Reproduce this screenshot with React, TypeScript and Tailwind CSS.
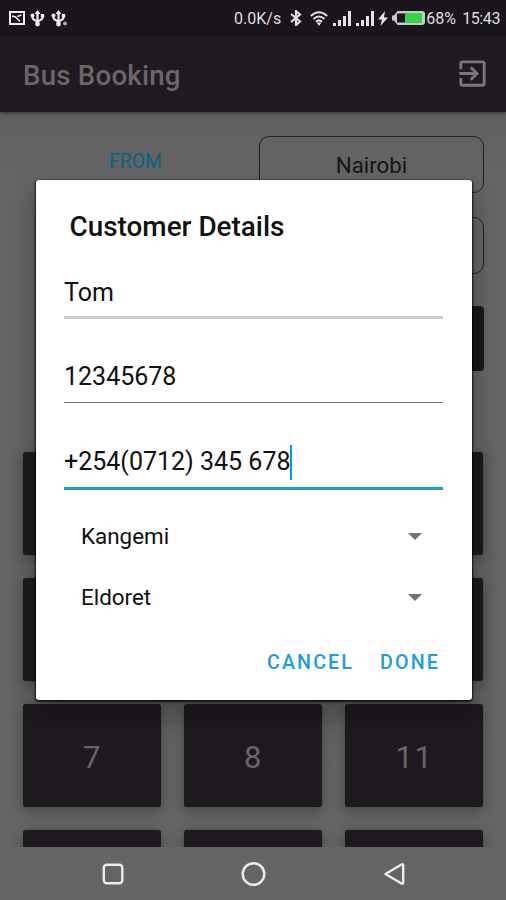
import { PropsWithChildren } from "react";

const seats = ["", "", "", "", "", "", "7", "8", "11", "", "", ""];

export default function App() {
  return (
    <div className="relative flex h-[900px] w-[506px] flex-col overflow-hidden bg-[#656565] font-['Roboto','Noto_Sans',sans-serif] text-[#111]">
      <StatusBar />

      {/* app bar */}
      <header className="z-10 flex h-[76px] shrink-0 items-center justify-between bg-[#1e1a1f] pr-[16px] pl-[23px] shadow-[0_1px_4px_rgba(0,0,0,0.5)]">
        <h1 className="pt-[3px] text-[27.7px] leading-8 font-medium tracking-[0.2px] text-[#69666a]">Bus Booking</h1>
        <ExitIcon />
      </header>

      <main className="h-[735px] shrink-0 overflow-hidden bg-linear-to-b from-[#606060] to-[#656565] to-10% px-[23px]">
        <div className="mt-6 grid grid-cols-[225px_225px] gap-x-[11px] gap-y-6">
          <div className="flex h-[57px] items-center justify-center pb-[5px] text-[19.4px] text-[#086285]">FROM</div>
          <Box>Nairobi</Box>
          <div />
          <Box />
          <div />
          <div className="mt-2 h-[65px] rounded-[4px] bg-[#1b171b]" />
        </div>

        {/* seats */}
        <div className="mt-[81px] grid grid-cols-3 gap-[23px]">
          {seats.map((label, i) => (
            <Seat key={i}>{label}</Seat>
          ))}
        </div>
      </main>

      <nav className="flex h-[53px] shrink-0 items-center">
        <svg className="h-[53px] w-[506px]" viewBox="0 0 506 53" fill="none" stroke="#ececec" strokeWidth="2.4" strokeLinejoin="round">
          <rect x="103.8" y="17.8" width="18.5" height="18.5" rx="3" />
          <circle cx="253.5" cy="27" r="10.8" />
          <path d="M385.5 27 L401.5 17.5 Q403.2 16.8 403.2 18.5 V35.5 Q403.2 37.3 401.5 36.5 Z" />
        </svg>
      </nav>

      {/* dialog */}
      <div className="absolute top-[180px] left-[35.5px] z-20 flex h-[520px] w-[436px] flex-col rounded-[3px] bg-white px-[28.5px] shadow-[0_1px_2px_1px_rgba(0,0,0,0.75),0_14px_26px_2px_rgba(0,0,0,0.28)]">
        <h2 className="mt-[31px] pl-[5.5px] text-[27.9px] leading-8 font-medium">Customer Details</h2>
        <div className="mt-[7px] flex h-[69px] items-center border-b-[3px] border-[#cbcbcb] pt-[20px] text-[25px]">Tom</div>
        <div className="mt-[17px] flex h-[67px] items-center border-b border-[#777] pt-[16px] text-[25px]">12345678</div>
        <div className="mt-[17px] flex h-[70px] items-center border-b-[3px] border-[#1f9bc4] pt-[17px] text-[25px]">
          +254(0712) 345 678
          <span className="-ml-px h-[35px] w-[2.5px] bg-[#039be5]" />
        </div>
        <div className="mt-[15px]">
          <Spinner>Kangemi</Spinner>
          <Spinner>Eldoret</Spinner>
        </div>
        <div className="mt-[22px] flex justify-end gap-[26px] pr-[3px] text-[19.7px] leading-7 font-medium tracking-[2.1px] text-[#1a9fda]">
          <button>CANCEL</button>
          <button>DONE</button>
        </div>
      </div>
    </div>
  );
}

function Box({ children }: PropsWithChildren) {
  return (
    <div className="flex h-[57px] items-center justify-center rounded-[10px] border border-[#222] pt-[3px] text-[22.3px] text-[#151515]">
      {children}
    </div>
  );
}

function Seat({ children }: PropsWithChildren) {
  return (
    <div className="flex h-[103px] items-center justify-center rounded-[3px] bg-[#1e191e] pt-[6px] pl-px text-[31px] tracking-[1.5px] text-[#686468] shadow-[0_4px_14px_2px_rgba(0,0,0,0.25),0_0_1px_rgba(0,0,0,0.4)]">
      {children}
    </div>
  );
}

function Spinner({ children }: PropsWithChildren) {
  return (
    <div className="flex h-[61px] items-center justify-between pt-[3px] pr-[21px] pl-[17px] text-[22.4px]">
      {children}
      <svg width="14" height="8" viewBox="0 0 14 8" fill="#737373">
        <path d="M0 0h14L7 7z" />
      </svg>
    </div>
  );
}

function ExitIcon() {
  return (
    <svg className="mb-[2px]" width="35" height="35" viewBox="0 0 24 24" fill="#79757a">
      <path d="M10.09 15.59 11.5 17l5-5-5-5-1.41 1.41L12.67 11H3v2h9.67l-2.58 2.59zM19 3H5a2 2 0 0 0-2 2v4h2V5h14v14H5v-4H3v4a2 2 0 0 0 2 2h14c1.1 0 2-.9 2-2V5c0-1.1-.9-2-2-2z" />
    </svg>
  );
}

function Usb({ dot = false }: { dot?: boolean }) {
  return (
    <svg width="17" height="17" viewBox="0 0 17 17" fill="none" stroke="#eee" strokeWidth="2.2">
      <path d="M7.5 3v11M2.500 5.500v2q0 2 5 4M12.500 5.500v2q0 2-5 4" />
      <path d="M7.5 0 10.5 4h-6z" fill="#eee" stroke="none" />
      <circle cx="2.5" cy="5.5" r="2" fill="#eee" stroke="none" />
      <circle cx="7.5" cy="14" r="2.4" fill="#eee" stroke="none" />
      <path d="M10.8 4h3.4v3.5h-3.4z" fill="#eee" stroke="none" />
      {dot && <circle cx="14" cy="13.5" r="2" fill="#aaa" stroke="none" />}
    </svg>
  );
}

function Signal() {
  return (
    <svg width="18" height="15" viewBox="0 0 18 15" fill="#e4e4e4">
      <path d="M0 12h3v3H0zM5 9h3v6H5zM10 5h3v10h-3zM15 0h3v15h-3z" />
    </svg>
  );
}

function StatusBar() {
  return (
    <div className="flex h-9 shrink-0 items-center justify-between bg-[#19151a] pr-[6px] pl-[9px] text-[#dedede]">
      <div className="flex items-center gap-[4px]">
        <svg width="16" height="14" viewBox="0 0 16 14" fill="none" stroke="#eee" strokeWidth="2">
          <path d="M1 1h14v12H1z" />
          <path d="M3 5l3.5 1L11 10.500M8.500 5.500 12.500 4" strokeWidth="1.6" />
        </svg>
        <div className="ml-[1px]">
          <Usb />
        </div>
        <Usb dot />
      </div>
      <div className="flex items-center text-[16px] leading-5">
        <span className="pt-px">0.0K/s</span>
        <svg className="ml-[9px]" width="12" height="16" viewBox="0 0 12 16" fill="none" stroke="#ddd" strokeWidth="2.2">
          <path d="M1 4l9 7.5L6 15V1l4 3.5L1 12" />
        </svg>
        <svg className="ml-[8px]" width="18" height="15" viewBox="0 0 18 15" fill="none" stroke="#ddd" strokeWidth="2">
          <path d="M.8 5Q9-2.5 17.2 5M3.5 8Q9 3 14.5 8M6 10.8Q9 8 12 10.8" />
          <path d="M6.5 11.5h5L9 15z" fill="#ddd" stroke="none" />
        </svg>
        <div className="ml-[5px] flex gap-[5px]">
          <Signal />
          <Signal />
        </div>
        <svg className="ml-[4px]" width="10" height="15" viewBox="0 0 10 15" fill="#e4e4e4">
          <path d="M7 0 0 8.5h4L2.5 15 10 6.5H6z" />
        </svg>
        <svg className="ml-[3px]" width="35" height="16" viewBox="0 0 35 16">
          <path d="M1 5.5h2L6.5 1H31a3 3 0 0 1 3 3v8a3 3 0 0 1-3 3H6.5L3 10.5H1z" fill="#c9c9c9" />
          <path d="M6 3.5h8v9H6z" fill="#19151a" />
          <path d="M14 3h17v10H14z" fill="#39d04e" />
        </svg>
        <span className="w-[30px] pt-px">68%</span>
        <span className="ml-[6px] pt-px tracking-[-0.4px]">15:43</span>
      </div>
    </div>
  );
}
